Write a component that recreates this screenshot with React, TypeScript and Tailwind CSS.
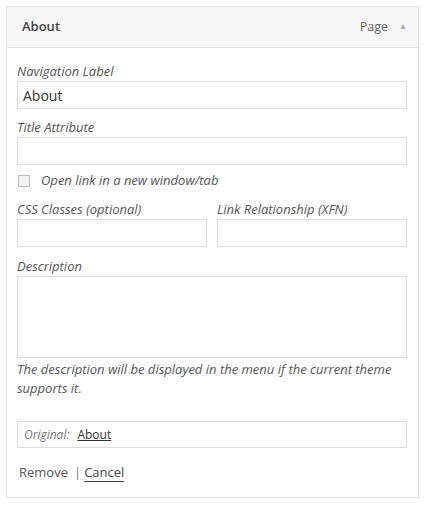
export default function App() {
  const font = { fontFamily: '"Open Sans", "Liberation Sans", sans-serif' };
  return (
    <div className="w-[426px] h-[506px] bg-white p-[6px] text-[#444]" style={font}>
      <div className="w-[413px] border border-[#e2e2e2] bg-white">
        <div className="h-[41px] bg-[#f7f7f7] border-b border-[#e2e2e2] flex items-center pl-[15px] pr-[11px]">
          <span className="text-[13px] font-semibold text-[#444] flex-1">About</span>
          <span className="text-[12.5px] text-[#666]">Page</span>
          <span className="ml-[11px] text-[8px] text-[#aaa] -mt-[2px]">▲</span>
        </div>
        <div className="pl-[10px] pr-[11px] pt-[13px] pb-[15px] text-[13px]">
          <div className="italic text-[#555] leading-[20px]">Navigation Label</div>
          <div className="h-[28px] border border-[#ddd] flex items-center px-[5px] text-[14px] text-[#333]">About</div>
          <div className="mt-[8px] italic text-[#555] leading-[20px]">Title Attribute</div>
          <div className="h-[28px] border border-[#ddd]"></div>
          <div className="mt-[9px] flex items-center h-[14px]">
            <div className="w-[12px] h-[12px] ml-[1px] border border-[#bbb] bg-[#f3f3f3]"></div>
            <span className="ml-[11px] italic text-[#555]">Open link in a new window/tab</span>
          </div>
          <div className="mt-[11px] flex gap-[10px]">
            <div className="flex-1">
              <div className="italic text-[#555] leading-[20px]">CSS Classes (optional)</div>
              <div className="h-[28px] border border-[#ddd]"></div>
            </div>
            <div className="flex-1">
              <div className="italic text-[#555] leading-[20px]">Link Relationship (XFN)</div>
              <div className="h-[28px] border border-[#ddd]"></div>
            </div>
          </div>
          <div className="mt-[9px] italic text-[#555] leading-[20px]">Description</div>
          <div className="h-[82px] border border-[#ddd] relative">
            <span className="absolute right-[2px] bottom-[0px] text-[7px] text-[#bbb] leading-none">.:</span>
          </div>
          <div className="mt-[2px] italic text-[#555] leading-[19px]">
            The description will be displayed in the menu if the current theme supports it.
          </div>
          <div className="mt-[23px] h-[27px] border border-[#ddd] flex items-center px-[6px] text-[12px]">
            <span className="italic text-[#777]">Original:</span>
            <span className="ml-[8px] underline text-[#333]">About</span>
          </div>
          <div className="mt-[14px] leading-[20px] text-[13px] text-[#555] pl-[2px]">
            Remove<span className="ml-[6px] mr-[3px] text-[#777]">|</span><span className="underline underline-offset-[4px] text-[#444]">Cancel</span>
          </div>
        </div>
      </div>
    </div>
  );
}
